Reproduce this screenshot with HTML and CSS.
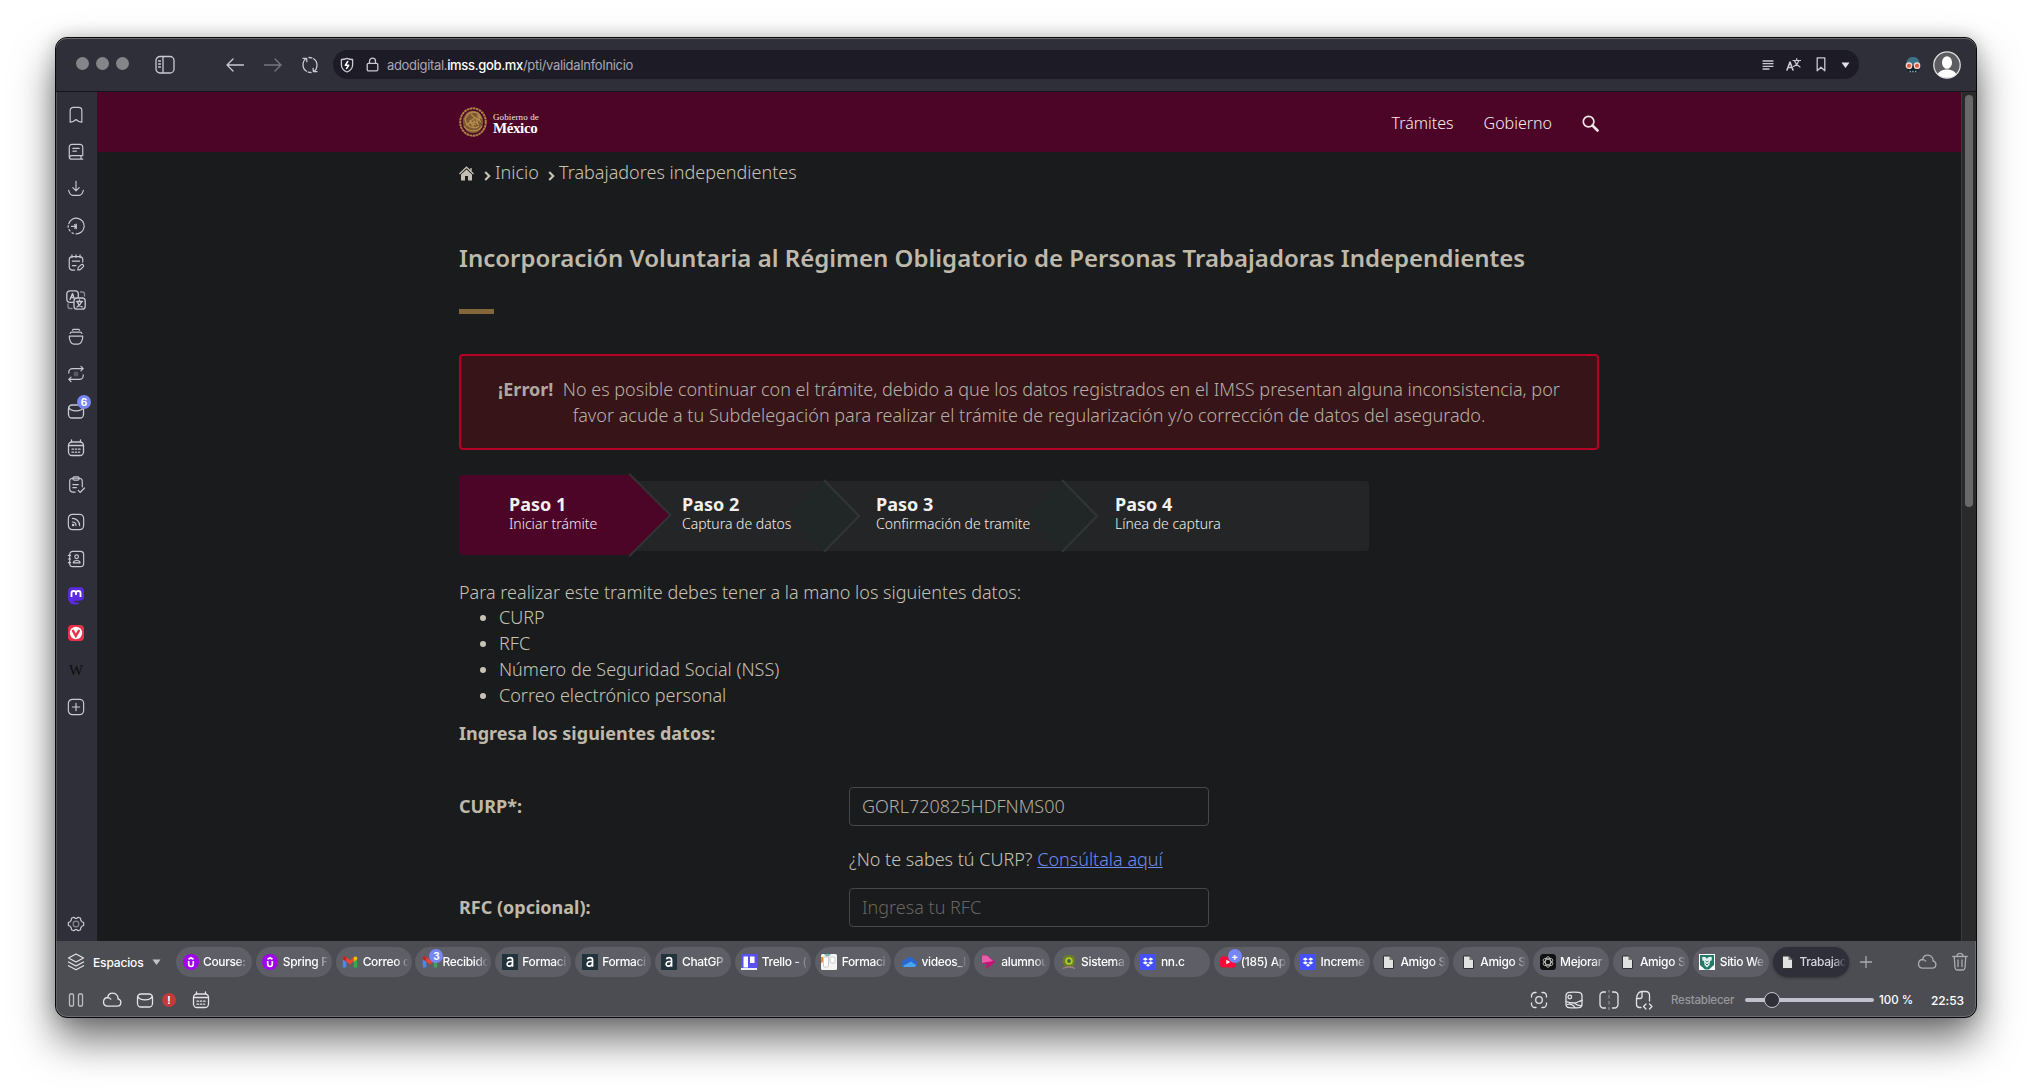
FILE: index.html
```html
<!DOCTYPE html>
<html lang="es">
<head>
<meta charset="utf-8">
<title>Trabajadores independientes</title>
<link rel="stylesheet" href="styles.css">
</head>
<body>
<svg class="defs" width="0" height="0">
  <symbol id="cloud" viewBox="0 0 20 16"><path d="M5 14.2h10.2a3.7 3.7 0 0 0 .8-7.300 5 5 0 0 0-2-4.600C10.500-.3 6 1.500 5.800 5.500a4.400 4.400 0 0 0-.8 8.700zM5.800 5.600c1.200 0 2.200.5 2.900 1.500"/></symbol>
  <symbol id="mail" viewBox="0 0 18 18"><rect x="1.500" y="3" width="15" height="13" rx="3.500"/><path d="M1.800 5.500c2 4.500 12.400 4.500 14.400 0"/></symbol>
  <symbol id="cal" viewBox="0 0 18 18"><rect x="1.500" y="3" width="15" height="13.500" rx="3.500"/><path d="M4.500.8V3M13.500.8V3M1.500 6.500h15M5 13.200h1.500M8.300 13.200h1.500M8.300 10.200h1.500M11.600 10.200h1.500M5 10.200h1.500M11.600 13.200h1"/></symbol>
  <symbol id="doc" viewBox="0 0 16 16"><path d="M3.500 2h6l4 4v8.500h-10z" fill="#e2e2e2" stroke="#333" stroke-width="1"/><path d="M9.500 2v4h4z" fill="#777"/></symbol>
  <symbol id="udemy" viewBox="0 0 16 16"><circle cx="8" cy="8" r="8" fill="#a300f0"/><path d="M5.700 7v3c0 3.300 4.600 3.300 4.600 0V7M5.500 5.300 8 3.700l2.500 1.600" fill="none" stroke="#fff" stroke-width="1.700"/></symbol>
  <symbol id="gmail" viewBox="0 0 16 16"><path d="M.8 4v9.500h3.400V7z" fill="#4f86f3"/><path d="M15.200 4v9.500h-3.400V7z" fill="#35aa53"/><path d="M.8 4.200C.8 2.500 2.800 2 4 3l4 3.200L12 3v4.300l-4 3.200-4-3.200z" fill="#e94435"/><path d="M.8 4.200C.8 2.500 3 2 4.200 3.200v4.200L.8 5.200z" fill="#c5221f"/><path d="M15.200 4.200c0-1.700-2.200-2.200-3.400-1v4.200l3.400-2.200z" fill="#fbbc04"/></symbol>
  <symbol id="alura" viewBox="0 0 16 16"><path fill="#22333b" d="M0 0h16v16H0z"/><path d="M5.400 5.300c.3-1.200 1.300-1.700 2.700-1.700 1.700 0 2.500.8 2.500 2.300v6.800M10.500 7.500H8c-3.800.3-3.600 4.600-.8 4.600 2 0 3.200-1.200 3.300-3" fill="none" stroke="#fff" stroke-width="1.600"/></symbol>
  <symbol id="dropbox" viewBox="0 0 16 16"><path fill="#4450ff" d="M0 0h16v16H0z"/><path d="m5.300 3.500 2.500 1.700-2.500 1.600-2.600-1.600zM10.700 3.500l2.600 1.700-2.600 1.600-2.500-1.600zM5.300 7.200l2.500 1.600-2.500 1.700-2.600-1.700zM10.700 7.200l2.600 1.600-2.600 1.700-2.500-1.700zM8 9.700l2.200 1.500L8 12.700l-2.200-1.500z" fill="#fff"/></symbol>
</svg>

<div class="window">
  <header class="toolbar">
    <div class="lights"><i></i><i></i><i></i></div>
    <svg class="ic panel" width="20" height="20" viewBox="0 0 20 20"><rect x="1" y="1.500" width="18" height="16.500" rx="4"/><path d="M8 2v15.500M3.500 6h2M3.500 9h2M3.500 12h2"/></svg>
    <svg class="ic back" width="20" height="18" viewBox="0 0 20 18"><path d="M2 9h16.500M8 3 2 9l6 6"/></svg>
    <svg class="ic fwd" width="20" height="18" viewBox="0 0 20 18"><path d="M1.500 9h16.500M12 3l6 6-6 6"/></svg>
    <svg class="ic reload" width="18" height="18" viewBox="0 0 18 18"><path d="M5.300 2.500C1 5 .8 12.500 5.500 15.200M12.700 15.500C17 13 17.200 5.500 12.500 2.800M2 2.300l3.600.1.3 3.300M16 15.700l-3.600-.1-.3-3.300M8 1.500c1 0 2 .1 2.800.4M10 16.500c-1 0-2-.1-2.800-.4"/></svg>
    <div class="url">
      <svg class="ic" width="14" height="16" viewBox="0 0 14 16"><path d="M7 1.300c2 .9 3.800 1.200 5.600 1.200V8c0 3.500-2.200 5.500-5.600 7C3.600 13.500 1.400 11.500 1.400 8V2.500C3.200 2.500 5 2.200 7 1.300z"/><path d="M7.700 4.500 5.300 8.300h3.400L6.500 11.500" stroke="#fff" stroke-width="1.500"/></svg>
      <svg class="ic lock" width="13" height="15" viewBox="0 0 13 15"><rect x="1.200" y="6.300" width="10.600" height="7.500" rx="1.300"/><path d="M3.500 6V4.200c0-4 6-4 6 0V6"/></svg>
      <span class="addr">adodigital.<b>imss.gob.mx</b>/pti/validaInfoInicio</span>
      <span class="url-actions">
        <svg class="ic lines" width="12" height="12" viewBox="0 0 12 12"><path d="M1 2h10M1 4.700h10M1 7.300h10M1 10h6"/></svg>
        <svg class="ic" width="15" height="15" viewBox="0 0 15 15"><path d="M1 13 4 5l3 8M2 10.500h4" stroke-width="1.600"/><path d="M7 3.500h7.500M10.700 1.500v2M12.800 3.500C12 6 10 8.500 7.500 9.500M8.500 4c1 2.500 3 4.500 5.500 6" stroke-width="1.200"/></svg>
        <svg class="ic" width="10" height="15" viewBox="0 0 10 15"><path d="M1.200 0.800h7.600v13L5 10.300l-3.800 3.500z"/></svg>
        <svg width="9" height="6" viewBox="0 0 9 6"><path d="M.5.500h8L4.500 6z" fill="#e2e2e8"/></svg>
      </span>
    </div>
    <svg class="skull" width="16" height="16" viewBox="0 0 16 16"><path d="M1.500 8C1 2.500 4 0 8 0s7 2.500 6.500 8z" fill="#3d7186"/><path d="M2.500 9h11v6h-11z" fill="#142127"/><circle cx="4" cy="8.700" r="2.700" fill="#e2563e" stroke="#f1d5cf" stroke-width="1.300"/><circle cx="12" cy="8.700" r="2.700" fill="#e2563e" stroke="#f1d5cf" stroke-width="1.300"/><path d="M4.500 14.500h1.500M7.200 14.500h1.500M10 14.500h1.500" stroke="#79a7b2" stroke-width="1.500"/></svg>
    <svg class="avatar" width="28" height="28" viewBox="0 0 28 28"><circle cx="14" cy="14" r="13.200" fill="#5d5d61" stroke="#dedee2" stroke-width="1.300"/><ellipse cx="14" cy="11.500" rx="5" ry="6.300" fill="#fff"/><path d="M4.800 23c2-3.500 6-4.500 9.200-4.500s7.200 1 9.200 4.500a13 13 0 0 1-18.400 0z" fill="#fff"/></svg>
  </header>

  <div class="middle">
    <aside class="panels">
      <svg class="ic" viewBox="0 0 20 20"><path d="M3.500 5a3.500 3.500 0 0 1 3.500-3.500h6A3.500 3.500 0 0 1 16.500 5v13c-2.500 0-4.500-1-6.500-3-2 2-4 3-6.500 3z"/></svg>
      <svg class="ic" viewBox="0 0 20 20"><path d="M17.500 14V4.500a3 3 0 0 0-3-3h-9a3 3 0 0 0-3 3v11a2.500 2.500 0 0 0 2.500 2.500h12.500M17.500 14H5a2 2 0 0 0-2 2M15.500 14v4M6.500 6h7M6.500 9h4"/></svg>
      <svg class="ic" viewBox="0 0 20 20"><path d="M10 1.500V12M6.500 8.500 10 12l3.500-3.500M1.800 11.500c1 3.500 2.800 5.500 4.700 5.500h7c1.900 0 3.700-2 4.700-5.500"/></svg>
      <svg class="ic" viewBox="0 0 20 20"><path d="M2 7.500A8.700 8.700 0 1 1 10 18.700M1.300 9.500v2M2.300 14c.3.600.6 1 1 1.500M5.500 17.500l1.500.7M5 10.500h5M10.300 8v5M8.500 8.500l2 2-2 2"/></svg>
      <svg class="ic" viewBox="0 0 20 20"><path d="M8.500 18H6a3.500 3.500 0 0 1-3.500-3.500V6.500A3.500 3.500 0 0 1 6 3h8a3.500 3.500 0 0 1 3.500 3.500V9M5.500 1v3M10 1v3M14.500 1v3M6 8h8M6 13h4M12 17.700c0-1.500.3-2.700 1-3.400l3-2.500c1.700-.8 3 .8 2.200 2.300l-3 2.800c-.8.700-1.800.9-3.200.8z"/></svg>
      <svg class="ic wide" viewBox="0 0 20 20"><rect x=".8" y=".8" width="11.500" height="11.500" rx="3"/><rect x="8" y="8" width="11.200" height="11.200" rx="3" fill="#2f2f3a"/><path d="M4 9.500 6.500 3.500 8 8M5 7.500h3M10.500 11.500h6M13.500 10v1.500M15.500 12c-.8 2.300-2.500 4-4.500 5M11.500 12.500c.8 2 2.500 3.500 4.800 4.500"/><path class="dim" d="M14.500 2h2A2 2 0 0 1 18.500 4v2M2 14v2.500a2 2 0 0 0 2 2h2"/></svg>
      <svg class="ic" viewBox="0 0 20 20"><path d="M2.500 9h15c0 5-2 9-5 9h-5c-3 0-5-4-5-9zM3.500 6c.2-1 1-1.500 2-1.500h9c1 0 1.800.5 2 1.500M6 2.500C6.300 1.800 7 1.500 7.500 1.500h5c.5 0 1.200.3 1.500 1"/></svg>
      <svg class="ic" viewBox="0 0 20 20"><path d="M2 9V8a4 4 0 0 1 4-4h12M15.500 1.500 18 4l-2.500 2.500M18 11v1a4 4 0 0 1-4 4H2M4.500 13.500 2 16l2.500 2.500"/><circle cx="10" cy="10" r="2.800" fill="#5a5a66" stroke="none"/></svg>
      <span class="badged"><svg class="ic" viewBox="0 0 18 18"><use href="#mail"/></svg><em>6</em></span>
      <svg class="ic" viewBox="0 0 18 18"><use href="#cal"/></svg>
      <svg class="ic" viewBox="0 0 20 20"><path d="M9 18H6.500A3.500 3.500 0 0 1 3 14.500V6a3.500 3.500 0 0 1 3.500-3.500h7A3.500 3.500 0 0 1 17 6v6M6.500 9.500h6M6.500 13h4M12.500 16l2 2.300 5-5"/><rect x="6.500" y="1" width="7" height="3.500" rx="1.500"/></svg>
      <svg class="ic" viewBox="0 0 20 20"><rect x="1.500" y="1.500" width="17" height="17" rx="4.500"/><path d="M6 6c4.500 0 8 3.500 8 8M6 10c2.500 0 4 1.500 4 4"/><circle cx="6.800" cy="13.300" r=".8"/></svg>
      <svg class="ic" viewBox="0 0 20 20"><rect x="3" y="1.500" width="15.500" height="17" rx="3.500"/><path d="M1.500 6H4M1.500 10H4M1.500 14H4M7 14.300c0-3.500 7.500-3.500 7.500 0z"/><circle cx="10.700" cy="7.500" r="2"/></svg>
      <svg viewBox="1 1 18 18"><path d="M2 6c0-3.500 1.500-4.700 4-4.700h8c2.500 0 4 1.200 4 4.700v4c0 3-1.500 4.500-4 4.800l-6 .2c.5 1.800 2.800 1.700 4.800 1.300v1.700C8 19.500 2 18.500 2 11z" fill="#5a2be0"/><path d="M5.500 11V7c0-2.700 4.300-2.700 4.500 0v2V7c.2-2.700 4.500-2.700 4.500 0v4" fill="none" stroke="#fff" stroke-width="1.800"/></svg>
      <svg viewBox="1 1 18 18"><rect x="2" y="2" width="16" height="16" rx="4" fill="#e8304a"/><circle cx="10" cy="10" r="6.200" fill="#fff"/><path d="m7 7.800 2.800 5 3-5" fill="none" stroke="#e8304a" stroke-width="2.400" stroke-linecap="round"/></svg>
      <span class="wiki">W</span>
      <svg class="ic" viewBox="0 0 20 20"><rect x="1.500" y="1.500" width="17" height="17" rx="4.500"/><path d="M10 6v8M6 10h8"/></svg>
      <svg class="ic gear" viewBox="0 0 20 20"><path d="M7.500 2.500 9 3.700h2l1.500-1.200 2.500 1.200.3 2L16.500 7.500l2 .8v3.400l-2 .8-1.200 1.800-.3 2-2.500 1.200-1.500-1.200H9l-1.500 1.200L5 16.300l-.3-2-1.200-1.800-2-.8V8.300l2-.8 1.200-1.800.3-2z"/><circle class="dim" cx="10" cy="10" r="3.200"/></svg>
    </aside>

    <div class="page">
      <div class="gobbar">
        <svg class="emblem" width="28" height="30" viewBox="0 0 28 30"><ellipse cx="14" cy="15" rx="12.800" ry="13.700" fill="none" stroke="#a98343" stroke-width="2" stroke-dasharray="2.600 .5"/><ellipse cx="14" cy="15" rx="10.300" ry="11.200" fill="#7c5531"/><path d="M6 12c2-5 5-7 8-7 4 0 7 3 8 6l-3-2 2 5-4-3 2 6-4-3-1 5-3-4-3 3zM5 19c3 6 14 7 18 0M8 17c3 4 8 5 12 2M12 7l4 4-5 3 6 4" fill="none" stroke="#b48d4c" stroke-width="1.300"/></svg>
        <div class="gobname"><span>Gobierno de</span><b>México</b></div>
        <nav><a>Trámites</a><a>Gobierno</a>
          <svg width="17" height="17" viewBox="0 0 17 17" fill="none" stroke="#f0e6e6"><circle cx="6.600" cy="6.600" r="5.300" stroke-width="1.700"/><path d="m10.500 10.500 5 5" stroke-width="2.600" stroke-linecap="round"/></svg>
        </nav>
      </div>
      <main>
        <div class="crumbs">
          <svg width="15" height="15" viewBox="0 0 15 15"><path d="M7.500 3.500 13 8.500v6H9V10H6v4.500H2v-6z" fill="#c5bfb2"/><path d="M.4 8 7.500 1.300 14.600 8M12 2v3" fill="none" stroke="#c5bfb2" stroke-width="1.400"/></svg>
          <svg class="chev" width="7" height="10" viewBox="0 0 7 10"><path d="m1.200 1 4 4-4 4"/></svg><span class="c1">Inicio</span>
          <svg class="chev" width="7" height="10" viewBox="0 0 7 10"><path d="m1.200 1 4 4-4 4"/></svg><span class="c2">Trabajadores independientes</span>
        </div>
        <h1>Incorporación Voluntaria al Régimen Obligatorio de Personas Trabajadoras Independientes</h1>
        <div class="rule"></div>
        <div class="alert"><b>¡Error!</b>&nbsp; No es posible continuar con el trámite, debido a que los datos registrados en el IMSS presentan alguna inconsistencia, por<br>favor acude a tu Subdelegación para realizar el trámite de regularización y/o corrección de datos del asegurado.</div>
        <div class="steps">
          <svg class="steps-bg" width="911" height="84" viewBox="0 -2 911 84"><path d="M100 6h806a4 4 0 0 1 4 4v62a4 4 0 0 1-4 4H100z" fill="#232527"/><path d="M330 41 365 6l35 35-35 35zM568 41l35-35 35 35-35 35z" fill="#212627"/><path d="m365 5 35 36-35 36M603 5l35 36-35 36M170-1l41 41-41 41" fill="none" stroke="#303436" stroke-width="2.500"/><path d="M4 0h166l40 40-40 40H4a4 4 0 0 1-4-4V4a4 4 0 0 1 4-4z" fill="#4c0427"/></svg>
          <div class="step"><b>Paso 1</b><span>Iniciar trámite</span></div>
          <div class="step"><b>Paso 2</b><span>Captura de datos</span></div>
          <div class="step"><b>Paso 3</b><span>Confirmación de tramite</span></div>
          <div class="step"><b>Paso 4</b><span>Línea de captura</span></div>
        </div>
        <p class="lead">Para realizar este tramite debes tener a la mano los siguientes datos:</p>
        <ul><li>CURP</li><li>RFC</li><li>Número de Seguridad Social (NSS)</li><li>Correo electrónico personal</li></ul>
        <p class="sub">Ingresa los siguientes datos:</p>
        <div class="form">
          <label>CURP*:</label><div class="field">GORL720825HDFNMS00</div>
          <p class="help">¿No te sabes tú CURP? <a>Consúltala aquí</a></p>
          <label>RFC (opcional):</label><div class="field empty">Ingresa tu RFC</div>
        </div>
      </main>
    </div>
    <div class="scroll"><i></i></div>
  </div>

  <div class="tabbar">
    <svg class="ic layers" width="18" height="18" viewBox="0 0 18 18"><path d="m9 1 7.500 4L9 9 1.500 5zM1.500 9 9 13l7.500-4M1.500 12.800 9 16.800l7.500-4"/></svg>
    <span class="espacios">Espacios</span>
    <svg class="caret" width="9" height="6" viewBox="0 0 9 6"><path d="M.5.500h8L4.500 6z" fill="#c4c4c8"/></svg>
    <div class="tabs">
      <div class="tab"><svg><use href="#udemy"/></svg><span>Course:</span></div>
      <div class="tab"><svg><use href="#udemy"/></svg><span>Spring F</span></div>
      <div class="tab"><svg><use href="#gmail"/></svg><span>Correo d</span></div>
      <div class="tab"><svg><use href="#gmail"/></svg><em>3</em><span>Recibido</span></div>
      <div class="tab"><svg><use href="#alura"/></svg><span>Formaci</span></div>
      <div class="tab"><svg><use href="#alura"/></svg><span>Formaci</span></div>
      <div class="tab"><svg><use href="#alura"/></svg><span>ChatGP</span></div>
      <div class="tab"><svg viewBox="0 0 16 16"><rect width="16" height="16" rx="1.500" fill="#5b50f5"/><path d="M2.500 2.500h4.500v11H2.500zM9 2.500h4.500V9H9z" fill="#fff"/><path d="M0 14h16v2H0z" fill="#eee"/></svg><span>Trello - (</span></div>
      <div class="tab"><svg viewBox="0 0 16 16"><rect width="16" height="16" rx="1.500" fill="#f5f4f2"/><path d="M3 0h7L8 2.500H5z" fill="#7fb5b5"/><path d="M0 3h2v5l-2 1z" fill="#e58a3a"/><rect x="2.500" y="3" width="5" height="10" rx="1" fill="#fff" stroke="#ccc"/><rect x="9" y="3" width="5" height="6" rx="1" fill="#fff" stroke="#ccc"/></svg><span>Formaci</span></div>
      <div class="tab"><svg viewBox="0 0 16 16"><path d="M2 12C-1 10 1 6 4 6c2-4 8-4 9.500.500C17 7 17 12 14 13H3z" fill="#2b67d1"/><path d="M2 12 10 7.500l5 3.500c0 1.500-1 2-2 2H4c-1 0-1.500-.3-2-1z" fill="#4aa3ee"/></svg><span>videos_I</span></div>
      <div class="tab"><svg viewBox="0 0 16 16"><path d="M1 1.500h5L14.500 8 4.500 15.500 6 10 1 9.500z" fill="#c4147a"/><path d="M1 1.500h5L12 7 1 9z" fill="#ea5cab"/></svg><span>alumnou</span></div>
      <div class="tab"><svg viewBox="0 0 16 16"><path d="M2 4C2 0 14 0 14 4v5l-2 4H4L2 9z" fill="#687c2b"/><circle cx="8" cy="7" r="3.800" fill="#b5c72b"/><circle cx="8" cy="7" r="1.900" fill="#336b37"/><path d="M2 14.500c3-2 9-2 12 0" stroke="#a08088" fill="none" stroke-width="1.500"/></svg><span>Sistema</span></div>
      <div class="tab"><svg><use href="#dropbox"/></svg><span>nn.c</span></div>
      <div class="tab"><svg viewBox="0 0 16 16"><rect y="2.500" width="16" height="11" rx="3" fill="#ff0838"/><path d="m6.300 5.700 4 2.300-4 2.300z" fill="#fff"/></svg><em>+</em><span>(185) Ap</span></div>
      <div class="tab"><svg><use href="#dropbox"/></svg><span>Increme</span></div>
      <div class="tab"><svg><use href="#doc"/></svg><span>Amigo S</span></div>
      <div class="tab"><svg><use href="#doc"/></svg><span>Amigo S</span></div>
      <div class="tab"><svg viewBox="0 0 16 16"><rect width="16" height="16" rx="3.500" fill="#111"/><g fill="none" stroke="#d0d0d0" stroke-width=".8"><ellipse cx="8" cy="8" rx="2.700" ry="5.300"/><ellipse cx="8" cy="8" rx="2.700" ry="5.300" transform="rotate(60 8 8)"/><ellipse cx="8" cy="8" rx="2.700" ry="5.300" transform="rotate(120 8 8)"/></g></svg><span>Mejorar</span></div>
      <div class="tab"><svg><use href="#doc"/></svg><span>Amigo S</span></div>
      <div class="tab"><svg viewBox="0 0 16 16"><path fill="#fff" d="M0 0h16v16H0z"/><path d="M1 1h14v10l-5 4.500H6L1 11z" fill="#25796a"/><path d="M3 3.500c2-1.500 4-.5 5 1.500 1-2 3-3 5-1.500l-.5 3L11 7l-.5 4L8 13.500 5.500 11 5 7l-1.500-.5z" fill="#e2f0ec"/><path d="M6.500 7c1 1 2 1 3 0M6.500 9.500l1.500 1.500 1.500-1.500" fill="none" stroke="#25796a"/></svg><span>Sitio We</span></div>
      <div class="tab active"><svg><use href="#doc"/></svg><span>Trabajac</span></div>
    </div>
    <svg class="ic plus" width="12" height="12" viewBox="0 0 12 12"><path d="M6 .5v11M.5 6h11"/></svg>
    <svg class="ic sync" width="20" height="16"><use href="#cloud"/></svg>
    <svg class="ic trash" width="16" height="20" viewBox="0 0 16 20"><path d="M.8 4.500h14.400M5 4.300c0-4 6-4 6 0M2.200 4.800 3 15.500c.2 1.700 1 2.500 2.500 2.500h5c1.500 0 2.300-.8 2.500-2.500l.8-10.700M6 8v6.500M10 8v6.500"/></svg>
  </div>

  <footer class="status">
    <svg class="ic pause" width="16" height="14" viewBox="0 0 16 14"><rect x="1.500" y="1" width="4" height="12" rx="1"/><rect x="10.500" y="1" width="4" height="12" rx="1"/></svg>
    <svg class="ic" width="20" height="16"><use href="#cloud"/></svg>
    <svg class="ic s-mail" width="18" height="18"><use href="#mail"/></svg>
    <i class="warn">!</i>
    <svg class="ic s-cal" width="18" height="18"><use href="#cal"/></svg>
    <svg class="ic s-cap" width="18" height="18" viewBox="0 0 18 18"><circle cx="9" cy="9" r="3.300"/><path d="M1.500 6V5A3.500 3.500 0 0 1 5 1.500h1M12 1.500h1A3.500 3.500 0 0 1 16.500 5v1M16.500 12v1a3.500 3.500 0 0 1-3.500 3.500h-1M6 16.500H5A3.500 3.500 0 0 1 1.500 13v-1"/></svg>
    <svg class="ic" width="18" height="18" viewBox="0 0 18 18"><path d="M1 5c0-2 1-3.500 3-3.700 3-.3 7-.3 10 0 2 .2 3 1.700 3 3.700v8c0 2-1 3.500-3 3.700-3 .3-7 .3-10 0-2-.2-3-1.700-3-3.700z"/><circle cx="4.800" cy="6" r="1.800"/><path d="M1 10.500c3 1.500 6 1.500 8 1.500 3 0 5-2 8-2.500M2 13.500c3-1 6 0 8 3M10 12.500c2.500 2 4 2.500 6.500 2"/></svg>
    <svg class="ic" width="20" height="20" viewBox="0 0 20 20"><path d="M6.500 2H4.500A3.500 3.500 0 0 0 1 5.500v9A3.500 3.500 0 0 0 4.500 18h2M13.500 2h2A3.500 3.500 0 0 1 19 5.500v9a3.500 3.500 0 0 1-3.500 3.500h-2"/><path class="dim" d="M10 0v2M10 5.500v2.500M10 11.500v2.500M10 17.500v2"/></svg>
    <svg class="ic" width="18" height="20" viewBox="0 0 18 20"><path d="M6 17.500H4A3 3 0 0 1 1.500 14.500V8.500C2 4.500 4 1.500 7 1.500h4A3.500 3.500 0 0 1 14.500 5v6M1.500 8.500H5a2 2 0 0 0 2-2v-5M11 14l-2.500 2.500L11 19M14.500 14l2.500 2.500-2.500 2.500"/></svg>
    <span class="reset">Restablecer</span>
    <div class="slider"><i></i></div>
    <span class="zoomv">100 %</span>
    <span class="clock">22:53</span>
  </footer>
</div>
</body>
</html>
```
FILE: styles.css
```css
* { box-sizing: border-box; }
body {
  margin: 0;
  height: 1091px;
  overflow: hidden;
  background: #fff;
  padding: 37px 55px;
  font-family: Inter, "Liberation Sans", sans-serif;
}
svg { display: block; flex: none; }
.defs { position: absolute; }
.window {
  width: 1922px;
  height: 981px;
  border: 1px solid #08080a;
  border-radius: 12px;
  overflow: hidden;
  background: #4c4d52;
  display: flex;
  flex-direction: column;
  box-shadow: inset 0 0 0 1px #6c6c72, 0 22px 40px rgba(0,0,0,.55), 0 0 18px rgba(0,0,0,.2);
}
.ic { fill: none; stroke: #c9c9d3; stroke-width: 1.3; stroke-linecap: round; stroke-linejoin: round; }
.dim { stroke: #888893; }

/* Toolbar */
.toolbar {
  height: 54px;
  flex: none;
  background: #2f2f39;
  border-bottom: 1px solid #15151a;
  box-shadow: inset 0 1px 0 #6a6a70;
  border-radius: 11px 11px 0 0;
  display: flex;
  align-items: center;
  padding: 0 15px 0 20px;
}
.lights { display: flex; gap: 7px; margin-top: -2px; }
.lights i { width: 13px; height: 13px; border-radius: 50%; background: #858489; }
.panel { margin-left: 26px; }
.back { margin-left: 50px; }
.fwd { margin-left: 18px; stroke: #777781; }
.reload { margin-left: 18px; }
.url {
  margin-left: 14px;
  width: 1526px;
  height: 29px;
  border-radius: 15px;
  background: #1d1b25;
  display: flex;
  align-items: center;
  padding: 0 9px 0 7px;
}
.lock { margin-left: 12px; }
.addr { margin-left: 8px; font-size: 13px; color: #a9a8b2; letter-spacing: -.33px; white-space: nowrap; }
.addr b { font-weight: 500; color: #fff; }
.url-actions { margin-left: auto; display: flex; gap: 15px; align-items: center; }
.url-actions .lines { margin-right: -3px; }
.skull { margin-left: 46px; }
.avatar { margin-left: 12px; }

/* Side panels */
.middle { height: 849px; flex: none; display: flex; background: #1a1b1c; }
.panels {
  width: 41px;
  background: #2f2f39;
  border-left: 1px solid #505059;
  display: flex;
  flex-direction: column;
  align-items: center;
  gap: 19px;
  padding: 14px 2px 8px 0;
}
.panels svg { width: 18px; height: 18px; }
.panels .wide { width: 20px; height: 20px; margin: -1px; }
.badged { position: relative; }
.badged em, .tab em {
  position: absolute;
  width: 14px;
  height: 14px;
  border-radius: 50%;
  background: #7786f5;
  color: #fff;
  font: 700 10px/14px Inter, sans-serif;
  text-align: center;
}
.badged em { left: 10px; top: -7px; }
.wiki { height: 18px; width: 18px; font: 15px/18px "Liberation Serif", serif; text-align: center; color: #0c0c0e; }
.panels .gear { margin-top: auto; }

/* Page */
.page { width: 1864px; overflow: hidden; font-family: "Noto Sans", sans-serif; font-weight: 300; color: #c8c2b5; font-size: 18px; line-height: 25.714px; }
.gobbar { height: 60px; background: #4c0427; display: flex; padding: 15px 362px 0; }
.gobname { margin: 5px 0 0 6px; color: #f1e4e8; font-family: "Liberation Serif", serif; }
.gobname span { display: block; font-size: 9px; line-height: 10px; letter-spacing: .1px; white-space: nowrap; }
.gobname b { display: block; font-size: 15px; line-height: 13px; height: 13px; font-weight: 700; letter-spacing: -.4px; color: #fff; }
.gobbar nav { margin-left: auto; display: flex; color: #f6ecee; padding-top: 4px; font-size: 16px; }
.gobbar nav a:nth-child(2) { margin-left: 30px; }
.gobbar nav svg { margin: 4px 0 0 30px; }
main { width: 1140px; margin-left: 362px; padding-top: 8px; }
.crumbs { display: flex; }
.crumbs svg { margin-top: 6px; }
.crumbs .chev { margin: 11px 4px 0 10px; fill: none; stroke: #c5bfb2; stroke-width: 2.200; }
.c1 { width: 43px; white-space: nowrap; }
h1 { margin: 59px 0 0; font-size: 24px; line-height: 26px; font-weight: 600; white-space: nowrap; color: #bfb9ac; }
.rule { margin-top: 38px; width: 35px; height: 5px; background: #836639; }
.alert {
  margin-top: 40px;
  height: 96px;
  border: 2px solid #b30224;
  border-radius: 4px;
  background: #361418;
  padding-top: 20px;
  line-height: 26px;
  text-align: center;
  white-space: nowrap;
  color: #b8afa5;
}
.alert b { font-weight: 700; color: #b0a79d; }
.steps { position: relative; margin-top: 25px; height: 80px; color: #f2f0ec; display: grid; grid-template-columns: 173px 194px 239px 200px; padding: 18px 0 0 50px; }
.steps-bg { position: absolute; left: 0; top: -2px; }
.step { position: relative; white-space: nowrap; }
.step b { display: block; font-weight: 700; line-height: 22px; }
.step span { display: block; font-size: 14px; line-height: 18px; }
.lead { margin: 25px 0 0; }
ul { margin: 0; padding-left: 40px; }
.sub { margin: 13px 0 0; font-weight: 700; color: #bfb9ac; }
.form { margin-top: 40px; display: grid; grid-template-columns: 390px 360px; align-items: center; }
.form label { font-weight: 700; color: #bfb9ac; }
.field { height: 39px; border: 1px solid #45484a; border-radius: 4px; padding: 6px 12px 0; color: #b3ada1; }
.empty { color: #686560; }
.help { grid-column: 2; margin: 21px 0 15.300px; white-space: nowrap; }
.help a { color: #6f8cf0; text-decoration: underline; }
.scroll { width: 15px; background: #2a2a2b; border-left: 1px solid #3b3b3c; padding: 3px 0 0 3px; }
.scroll i { display: block; width: 8px; height: 412px; border-radius: 4px; background: #69696a; }

/* Tabs */
.tabbar { height: 42px; flex: none; display: flex; align-items: center; padding-left: 10px; color: #fff; font-size: 12px; font-weight: 500; border-left: 1px solid #606066; }
.tabbar .ic, .status .ic { stroke: #e2e2e8; }
.espacios { width: 59px; margin-left: 8px; letter-spacing: -.15px; }
.tabs { display: flex; gap: 3.830px; margin-left: 15px; }
.tab { position: relative; width: 76px; height: 30px; border-radius: 15px; background: #5d5e66; display: flex; align-items: center; gap: 4.500px; padding: 0 2px 0 6.500px; }
.tab svg { width: 16px; height: 16px; }
.tab span {
  flex: 1;
  overflow: hidden;
  white-space: nowrap;
  line-height: 18px;
  letter-spacing: -.35px;
  -webkit-mask-image: linear-gradient(90deg, #000 70%, transparent 98%);
  mask-image: linear-gradient(90deg, #000 70%, transparent 98%);
}
.tab em { left: 14px; top: 2px; z-index: 1; }
.active { background: #2f2f39; box-shadow: 0 1px 3px rgba(0,0,0,.35); color: #d5d5e0; }
.tabbar .plus { margin-left: 11px; stroke: #aaaab0; }
.tabbar .sync { margin-left: 45px; stroke: #aaaab0; }
.tabbar .trash { margin-left: 15px; stroke: #aaaab0; }

/* Status bar */
.status { height: 34px; flex: none; display: flex; align-items: center; padding-left: 11px; color: #fff; font-size: 12px; font-weight: 500; border-left: 1px solid #606066; }
.status > * { margin-right: 16px; }
.status .pause { margin-right: 18px; stroke: #bdbdc2; }
.status .s-mail { margin-left: -2px; margin-right: 8px; }
.warn { width: 14px; height: 14px; border-radius: 50%; background: #c23a3c; font: 700 10px/14px Inter, sans-serif; text-align: center; }
.status .s-cap { margin-left: auto; margin-right: 17px; }
.status .reset { color: #98989e; margin: 0 9px 0 2px; width: 65px; font-size: 11.500px; letter-spacing: -.2px; }
.slider { width: 129px; height: 4px; border-radius: 2px; background: #bfc2cb; }
.status .slider { margin-right: 5px; }
.slider i { display: block; width: 16px; height: 16px; margin: -6px 0 0 19px; border-radius: 50%; background: #30303b; border: 1px solid #c5c6ce; }
.status .zoomv { width: 38px; margin-right: 14px; font-size: 11.500px; white-space: nowrap; }
.status .clock { width: 32px; margin-right: 13px; letter-spacing: -.1px; }
```
